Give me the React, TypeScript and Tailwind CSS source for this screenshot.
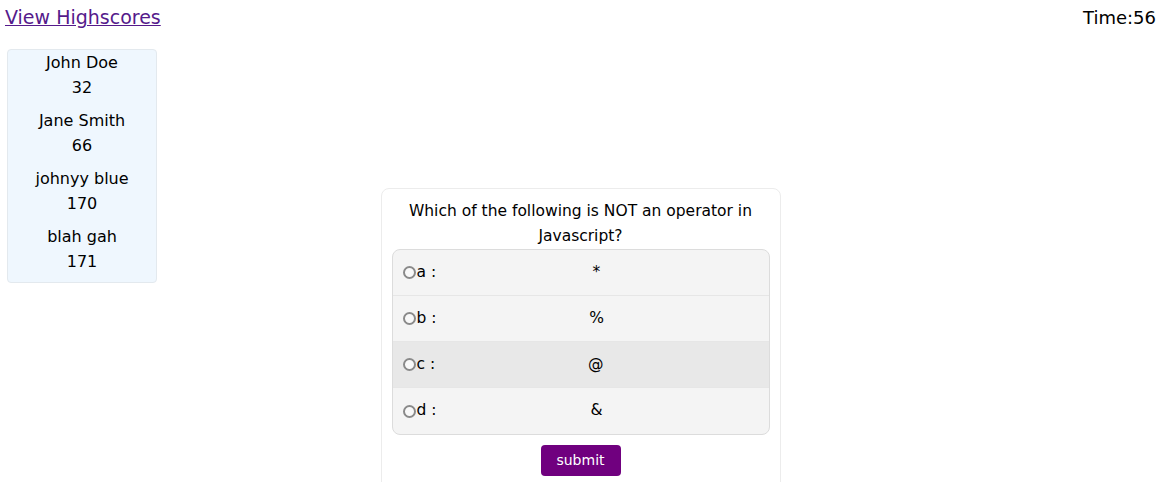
const scores = [
  { name: "John Doe", score: 32 },
  { name: "Jane Smith", score: 66 },
  { name: "johnyy blue", score: 170 },
  { name: "blah gah", score: 171 },
];

const options = [
  { key: "a", value: "*" },
  { key: "b", value: "%" },
  { key: "c", value: "@" },
  { key: "d", value: "&" },
];

function App() {
  return (
    <div className="min-h-screen bg-white font-['DejaVu_Sans',sans-serif] text-black">
      <header className="flex justify-between items-start px-[5px] pt-[4px] h-[49px]">
        <a href="#" className="text-[19px] leading-[27px] text-[#551a8b] underline">
          View Highscores
        </a>
        <p className="text-[18px] leading-[27px]">Time:56</p>
      </header>

      <div className="grid grid-cols-[1fr_400px_1fr]">
        <div className="justify-self-start ml-[7px]">
          <ul className="w-[150px] bg-[#eff7fe] border border-[#e3e9ee] rounded-[4px] pb-[8px]">
            {scores.map((s) => (
              <li key={s.name} className="text-center text-[16px] leading-[25px] mb-[8px] last:mb-0">
                <p>{s.name}</p>
                <p>{s.score}</p>
              </li>
            ))}
          </ul>
        </div>

        <div className="mt-[139px] border border-[#ececec] rounded-[8px] px-[10px] pt-[10px] pb-[20px]">
          <h2 className="text-center text-[15.5px] leading-[25px] px-[12px]">
            Which of the following is NOT an operator in Javascript?
          </h2>
          <div className="border border-[#dcdcdc] rounded-[8px] bg-[#f4f4f4] overflow-hidden">
            {options.map((o) => (
              <label
                key={o.key}
                className={`flex items-center h-[46px] pl-[10px] pr-[12px] text-[15.5px] border-b border-[#e6e6e6] last:border-b-0 ${o.key === "c" ? "bg-[#e8e8e8]" : ""}`}
              >
                <span className="shrink-0 box-border w-[13px] h-[13px] rounded-full border-2 border-[#8a8a8a] bg-[#f8f8f8]" />
                <span className="ml-[1px]">{o.key} :</span>
                <span className="flex-1 text-center">{o.value}</span>
              </label>
            ))}
          </div>
          <div className="flex justify-center mt-[10px]">
            <button className="w-[80px] h-[31px] rounded-[4px] bg-[#70007f] text-white text-[14px]">
              submit
            </button>
          </div>
        </div>
        <div />
      </div>
    </div>
  );
}

export default App;
